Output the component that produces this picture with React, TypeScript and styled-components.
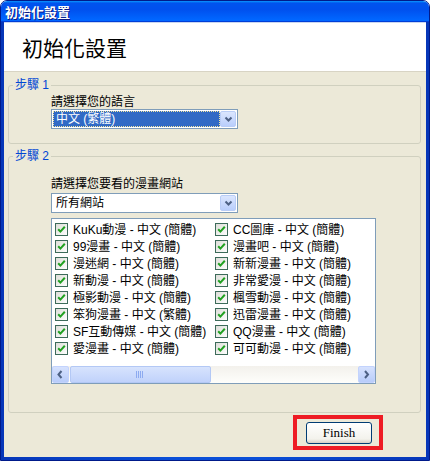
import React from 'react';
import styled, { createGlobalStyle } from 'styled-components';

const GlobalStyle = createGlobalStyle`
  html, body {
    margin: 0;
    padding: 0;
    background: #ffffff;
  }
  * {
    box-sizing: border-box;
  }
`;

const UI_FONT = `"Liberation Sans", "Noto Sans CJK TC", sans-serif`;

const Window = styled.div`
  width: 430px;
  height: 461px;
  display: flex;
  flex-direction: column;
  border: 1px solid #001a8a;
  border-radius: 7px 7px 0 0;
  overflow: hidden;
  font-family: ${UI_FONT};
  font-size: 12px;
`;

const TitleBar = styled.div`
  height: 21px;
  flex: none;
  display: flex;
  align-items: center;
  padding-left: 4px;
  color: #ffffff;
  font-weight: bold;
  font-size: 13px;
  text-shadow: 1px 1px 0 #0a1883;
  background: linear-gradient(
    to bottom,
    #0997ff 0%,
    #0053ee 10%,
    #0050ee 40%,
    #0066ff 88%,
    #0066ff 93%,
    #005bff 95%,
    #003dd7 97%,
    #003dd7 100%
  );
`;

const Frame = styled.div`
  flex: 1;
  display: flex;
  padding: 0 3px 3px;
  background: linear-gradient(to right, #0636b8, #0a4fd8 40%, #0a4fd8 60%, #0636b8);
`;

const Client = styled.div`
  flex: 1;
  display: flex;
  flex-direction: column;
  background: #ece9d8;
  border-top: 1px solid #c9d6f0;
`;

const Header = styled.div`
  height: 49px;
  flex: none;
  display: flex;
  align-items: center;
  padding-left: 18px;
  background: #ffffff;
  border-bottom: 1px solid #d8d4c4;
  font-size: 21px;
  color: #000000;
`;

const Group = styled.fieldset<{ $top: number; $pad: string }>`
  margin: ${p => p.$top}px 5px 0 4px;
  padding: ${p => p.$pad};
  border: 1px solid #d0d0bf;
  border-radius: 3px;
  min-width: 0;
`;

const Caption = styled.legend`
  margin-left: 4px;
  padding: 0 2px;
  color: #0046d5;
  font-size: 12px;
  line-height: 14px;
`;

const GroupBody = styled.div`
  padding-left: 42px;
`;

const FieldLabel = styled.div`
  font-size: 12px;
  line-height: 14px;
  color: #000000;
`;

const Select = styled.div<{ $mt: number }>`
  width: 187px;
  height: 20px;
  margin-top: ${p => p.$mt}px;
  display: flex;
  align-items: stretch;
  background: #ffffff;
  border: 1px solid #7f9db9;
  padding: 1px;
`;

const SelectValue = styled.div<{ $selected?: boolean }>`
  flex: 1;
  display: flex;
  align-items: center;
  padding-left: 3px;
  line-height: 14px;
  color: ${p => (p.$selected ? '#ffffff' : '#000000')};
  background: ${p => (p.$selected ? '#316ac5' : 'transparent')};
  outline: ${p => (p.$selected ? '1px dotted #f2e6a0' : 'none')};
  outline-offset: -1px;
`;

const ArrowButton = styled.div`
  width: 16px;
  flex: none;
  display: flex;
  align-items: center;
  justify-content: center;
  border: 1px solid #b9cdf7;
  border-radius: 2px;
  background: linear-gradient(to bottom, #dbe6fe, #b9cefc);
`;

const ListBox = styled.div`
  width: 325px;
  height: 166px;
  margin-top: 5px;
  display: flex;
  flex-direction: column;
  background: #ffffff;
  border: 1px solid #7f9db9;
`;

const Items = styled.div`
  flex: 1;
  display: grid;
  grid-template-columns: 160px 160px;
  grid-auto-rows: 17px;
  padding: 2px 0 0 3px;
`;

const Item = styled.div`
  display: flex;
  align-items: center;
  gap: 5px;
  white-space: nowrap;
  line-height: 14px;
  color: #000000;
`;

const ScrollBar = styled.div`
  height: 17px;
  flex: none;
  display: flex;
  background: linear-gradient(to bottom, #f3f1ec, #fefefb);
`;

const ScrollButton = styled.div`
  width: 17px;
  flex: none;
  display: flex;
  align-items: center;
  justify-content: center;
  border: 1px solid #c3d3fd;
  border-radius: 2px;
  background: linear-gradient(to bottom, #d6e2fe, #b8ccfa);
`;

const Track = styled.div`
  flex: 1;
  display: flex;
  padding: 0 1px;
`;

const Thumb = styled.div`
  display: flex;
  align-items: center;
  justify-content: center;
  border: 1px solid #b3c8f5;
  border-radius: 2px;
  background: linear-gradient(to bottom, #d7e3fd, #c0d2fb);
`;

const Footer = styled.div`
  display: flex;
  justify-content: flex-end;
  padding: 2px 43px 0 0;
`;

const Highlight = styled.div`
  border: 4px solid #ee1c24;
  padding: 3px 7px 2px 9px;
`;

const Button = styled.button`
  width: 66px;
  height: 22px;
  padding: 0;
  border: 1px solid #003c74;
  border-radius: 3px;
  background: linear-gradient(to bottom, #ffffff, #f3f2ec 80%, #d6d0c5);
  font-family: "Liberation Serif", "Noto Sans CJK TC", serif;
  font-size: 13px;
  color: #000000;
`;

const Check = () => (
  <svg width="13" height="13" viewBox="0 0 13 13">
    <defs>
      <linearGradient id="cb" x1="0" y1="0" x2="1" y2="1">
        <stop offset="0" stopColor="#dcdcd7" />
        <stop offset="1" stopColor="#ffffff" />
      </linearGradient>
    </defs>
    <rect x="0.5" y="0.5" width="12" height="12" fill="url(#cb)" stroke="#3d6b5a" />
    <path d="M3.2 6.2 L5.4 8.6 L9.8 3.8" fill="none" stroke="#21a121" strokeWidth="2" />
  </svg>
);

const Chevron = ({ dir }: { dir: 'down' | 'left' | 'right' }) => {
  const d =
    dir === 'down' ? 'M2.5 3.5 L5.5 6.5 L8.5 3.5' : dir === 'left' ? 'M6.5 2 L3.5 5.5 L6.5 9' : 'M4 2 L7 5.5 L4 9';
  return (
    <svg width="11" height="11" viewBox="0 0 11 11">
      <path d={d} fill="none" stroke="#4d6185" strokeWidth="2" />
    </svg>
  );
};

const Grip = () => (
  <svg width="8" height="7" viewBox="0 0 8 7">
    {[0.5, 2.5, 4.5, 6.5].map(x => (
      <line key={x} x1={x} y1="0" x2={x} y2="7" stroke="#8caaf0" />
    ))}
  </svg>
);

const sites: [string, string][] = [
  ['KuKu動漫 - 中文 (簡體)', 'CC圖庫 - 中文 (簡體)'],
  ['99漫畫 - 中文 (簡體)', '漫畫吧 - 中文 (簡體)'],
  ['漫迷網 - 中文 (簡體)', '新新漫畫 - 中文 (簡體)'],
  ['新動漫 - 中文 (簡體)', '非常愛漫 - 中文 (簡體)'],
  ['極影動漫 - 中文 (簡體)', '楓雪動漫 - 中文 (簡體)'],
  ['笨狗漫畫 - 中文 (繁體)', '迅雷漫畫 - 中文 (簡體)'],
  ['SF互動傳媒 - 中文 (簡體)', 'QQ漫畫 - 中文 (簡體)'],
  ['愛漫畫 - 中文 (簡體)', '可可動漫 - 中文 (簡體)'],
];

export default function App() {
  return (
    <>
      <GlobalStyle />
      <Window>
        <TitleBar>初始化設置</TitleBar>
        <Frame>
          <Client>
            <Header>初始化設置</Header>

            <Group $top={6} $pad="3px 0 14px 0">
              <Caption>步驟 1</Caption>
              <GroupBody>
                <FieldLabel>請選擇您的語言</FieldLabel>
                <Select $mt={0}>
                  <SelectValue $selected>中文 (繁體)</SelectValue>
                  <ArrowButton>
                    <Chevron dir="down" />
                  </ArrowButton>
                </Select>
              </GroupBody>
            </Group>

            <Group $top={5} $pad="14px 0 28px 0">
              <Caption>步驟 2</Caption>
              <GroupBody>
                <FieldLabel>請選擇您要看的漫畫網站</FieldLabel>
                <Select $mt={2}>
                  <SelectValue>所有網站</SelectValue>
                  <ArrowButton>
                    <Chevron dir="down" />
                  </ArrowButton>
                </Select>
                <ListBox>
                  <Items>
                    {sites.flat().map(name => (
                      <Item key={name}>
                        <Check />
                        {name}
                      </Item>
                    ))}
                  </Items>
                  <ScrollBar>
                    <ScrollButton>
                      <Chevron dir="left" />
                    </ScrollButton>
                    <Track>
                      <Thumb style={{ width: '49%' }}>
                        <Grip />
                      </Thumb>
                    </Track>
                    <ScrollButton>
                      <Chevron dir="right" />
                    </ScrollButton>
                  </ScrollBar>
                </ListBox>
              </GroupBody>
            </Group>

            <Footer>
              <Highlight>
                <Button>Finish</Button>
              </Highlight>
            </Footer>
          </Client>
        </Frame>
      </Window>
    </>
  );
}
